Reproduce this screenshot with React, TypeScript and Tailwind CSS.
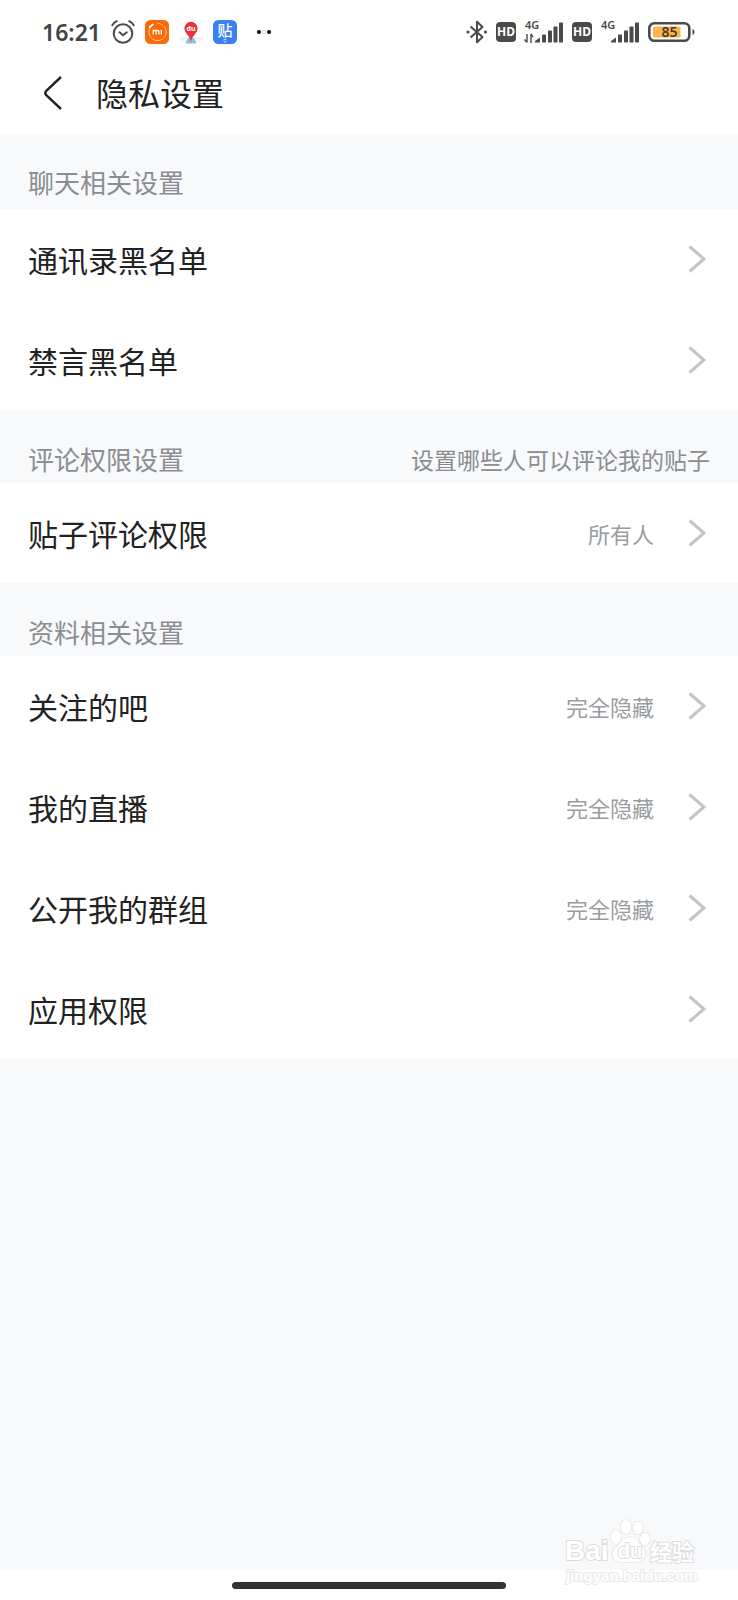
import React from 'react';

interface SettingItem {
  label: string;
  value?: string;
}

interface SettingGroup {
  title: string;
  hint?: string;
  items: SettingItem[];
}

const groups: SettingGroup[] = [
  {
    title: '聊天相关设置',
    items: [{ label: '通讯录黑名单' }, { label: '禁言黑名单' }],
  },
  {
    title: '评论权限设置',
    hint: '设置哪些人可以评论我的贴子',
    items: [{ label: '贴子评论权限', value: '所有人' }],
  },
  {
    title: '资料相关设置',
    items: [
      { label: '关注的吧', value: '完全隐藏' },
      { label: '我的直播', value: '完全隐藏' },
      { label: '公开我的群组', value: '完全隐藏' },
      { label: '应用权限' },
    ],
  },
];

const AlarmIcon = () => (
  <svg width="24" height="24" viewBox="0 0 24 24" fill="none" stroke="#4a4a4a" strokeWidth="2" strokeLinecap="round">
    <circle cx="12" cy="13.5" r="9.3" />
    <path d="M1.3 5.2C2.4 3.4 4 2 5.8 1.2M22.7 5.2C21.6 3.4 20 2 18.2 1.2" />
    <path d="M8.5 12.3l3.5 3 3.8-3" strokeLinejoin="round" />
  </svg>
);

const MiIcon = () => (
  <svg width="24" height="24" viewBox="0 0 24 24" fill="none">
    <rect width="24" height="24" rx="5.5" fill="#fb6a05" />
    <path d="M7.500 5A8.600 8.600 0 1 0 12.500 3.400" stroke="#ffc9a3" strokeWidth="1" />
    <path d="M4.6 7.2l3.2-2.8" stroke="#fff" strokeWidth="1.8" strokeLinecap="round" />
    <path d="M8.200 14.500v-4h4.800q1 0 1 1v3M11.100 14.500v-3.600M16.300 10v4.500" stroke="#fff" strokeWidth="1.300" />
  </svg>
);

const MapPinIcon = () => (
  <svg width="24" height="24" viewBox="0 0 24 24">
    <path d="M0 18l6-1 6 2 6-2 6 1-3 4H3z" fill="#eef3f4" />
    <path d="M9 18h6l2.5 5.5h-11z" fill="#8ebde6" />
    <path d="M12 22c-.8-6-6.6-8.6-6.6-13.7a6.6 6.6 0 0 1 13.2 0C18.6 13.4 12.8 16 12 22z" fill="#e8323c" />
    <text x="12" y="10.5" textAnchor="middle" fontSize="7" fontWeight="700" fill="#fff">
      du
    </text>
  </svg>
);

const TiebaIcon = () => (
  <svg width="24" height="24" viewBox="0 0 24 24">
    <rect width="24" height="24" rx="5.5" fill="#3b80f3" />
    <text x="12" y="15.5" textAnchor="middle" fontSize="15" fontWeight="500" fill="#fff">
      贴
    </text>
    <path d="M10.5 20l1.500-1 1.500 1M10.800 21.800h2.400" fill="none" stroke="#d5e5ff" />
  </svg>
);

const BluetoothIcon = () => (
  <svg width="22" height="24" viewBox="0 0 22 24" fill="none" stroke="#4a4a4a" strokeWidth="2" strokeLinejoin="round">
    <path d="M4.5 6.5l12 10.5-5.5 5.2V1.8L16.5 7l-12 10.5" />
    <circle cx="2" cy="12" r="1.6" fill="#4a4a4a" stroke="none" />
    <circle cx="19.5" cy="12" r="1.6" fill="#4a4a4a" stroke="none" />
  </svg>
);

const HdBadge = () => (
  <span className="flex h-5 w-5 items-center justify-center rounded bg-[#4a4a4a] text-[12px] leading-none font-bold text-white">
    HD
  </span>
);

const SignalIcon = ({ arrows = false }: { arrows?: boolean }) => (
  <svg width="40" height="32" viewBox="0 -4 40 32" fill="#4a4a4a">
    <text x="1" y="9" fontSize="11" fontWeight="600">
      4G
    </text>
    {arrows && (
      <path
        d="M3 14v8.5M.5 19.5L3 22.5M7 23v-9M9 17l-2-3"
        fill="none"
        stroke="#4a4a4a"
        strokeWidth="1.4"
      />
    )}
    <path d="M11 22.5v-1.5l5-3.5v5z" />
    <rect x="18" y="14.5" width="4" height="8" rx=".8" />
    <rect x="24" y="10.5" width="4" height="12" rx=".8" />
    <rect x="29.5" y="6.5" width="4" height="16" rx=".8" />
    <rect x="35" y="2.5" width="4" height="20" rx=".8" />
  </svg>
);

const BatteryIcon = () => (
  <svg width="48" height="22" viewBox="0 0 48 22">
    <rect x="1.3" y="2.3" width="40" height="17.5" rx="5" fill="#fff" stroke="#4a4a4a" strokeWidth="2.6" />
    <rect x="5" y="5.5" width="27.5" height="11" rx="1.5" fill="#fbb550" />
    <path d="M44.5 8v6q2-.5 2-3t-2-3z" fill="#4a4a4a" />
    <text x="21.5" y="16" textAnchor="middle" fontSize="14" fontWeight="600" fill="#4a3a24">
      85
    </text>
  </svg>
);

const StatusBar: React.FC = () => (
  <div className="flex h-16 items-center justify-between pr-[42px] pl-[42px] font-['Noto_Sans','Noto_Sans_CJK_SC',sans-serif]">
    <div className="flex items-center gap-[10px]">
      <span className="text-[23px] leading-6 font-semibold text-[#444]">16:21</span>
      <AlarmIcon />
      <MiIcon />
      <MapPinIcon />
      <TiebaIcon />
      <span className="ml-[10px] flex gap-[6px]">
        <i className="size-1 rounded-full bg-black" />
        <i className="size-1 rounded-full bg-black" />
      </span>
    </div>
    <div className="flex items-center gap-2">
      <BluetoothIcon />
      <HdBadge />
      <SignalIcon arrows />
      <HdBadge />
      <SignalIcon />
      <BatteryIcon />
    </div>
  </div>
);

const SettingRow: React.FC<SettingItem> = ({ label, value }) => (
  <li>
    <button type="button" className="flex h-[100px] w-full items-center pr-8 pl-7 text-left">
      <span className="flex-1 text-[30px] text-[#222]">{label}</span>
      {value && <span className="mr-[34px] text-[22px] text-[#999ca0]">{value}</span>}
      <svg width="18" height="28" viewBox="0 0 18 28" fill="none" stroke="#c3c4c8" strokeWidth="3">
        <path d="M1.5 1.500L16 14 1.5 26.5" />
      </svg>
    </button>
  </li>
);

const Watermark = () => (
  <svg
    className="absolute right-9 bottom-3 font-['Liberation_Sans','Noto_Sans_CJK_SC',sans-serif]"
    width="140"
    height="72"
    viewBox="0 0 140 72"
    fill="#fff"
    stroke="#dcdddf"
    strokeWidth="1.2"
    paintOrder="stroke"
  >
    <text x="3" y="44" fontSize="28" fontWeight="700" strokeWidth="2">
      Bai
    </text>
    <ellipse cx="54" cy="21" rx="5" ry="7" />
    <ellipse cx="64" cy="11" rx="5.5" ry="7" />
    <ellipse cx="76" cy="12" rx="5" ry="6.5" />
    <ellipse cx="83" cy="23" rx="5" ry="6.5" />
    <path d="M68 21c6 0 8 5 12 9 5 5 5 16-5 16H60c-11 0-12-10-6-15 5-4 7-10 14-10z" />
    <text x="68" y="42" fontSize="20" fontWeight="700" textAnchor="middle" strokeWidth="2">
      du
    </text>
    <text x="88" y="44" fontSize="22" fontWeight="700" strokeWidth="2">
      经验
    </text>
    <text x="4" y="65" fontSize="15" fontWeight="700" stroke="#e9eaec" strokeWidth="2">
      jingyan.baidu.com
    </text>
  </svg>
);

const App: React.FC = () => {
  return (
    <div className="relative flex min-h-screen flex-col bg-[#f7f9fb] font-['Noto_Sans_CJK_SC',sans-serif]">
      <header className="bg-white">
        <StatusBar />
        <div className="flex h-[70px] items-center pb-3 pl-[42px]">
          <button type="button" aria-label="返回" className="mr-8">
            <svg width="22" height="36" viewBox="0 0 22 36" fill="none" stroke="#222" strokeWidth="2.4">
              <path d="M19 2L4.5 15.5q-2.5 2.500 0 5L19 34" />
            </svg>
          </button>
          <h1 className="pb-[3px] text-[32px] leading-10 text-[#222]">隐私设置</h1>
        </div>
      </header>

      <main className="flex-1">
        {groups.map((group) => (
          <section key={group.title} className="group">
            <div className="flex h-[73px] items-center justify-between px-7 pt-6 text-[#8b8d91] group-first:h-[75px] group-first:pb-1">
              <h2 className="text-[26px] leading-9">{group.title}</h2>
              {group.hint && <p className="text-[23px] leading-9">{group.hint}</p>}
            </div>
            <ul className="flex flex-col gap-px bg-white">
              {group.items.map((item) => (
                <SettingRow key={item.label} {...item} />
              ))}
            </ul>
          </section>
        ))}
      </main>

      <footer className="flex h-[30px] items-center justify-center bg-white">
        <div className="h-[7px] w-[37%] rounded-full bg-[#333]" />
      </footer>
      <Watermark />
    </div>
  );
};

export default App;
